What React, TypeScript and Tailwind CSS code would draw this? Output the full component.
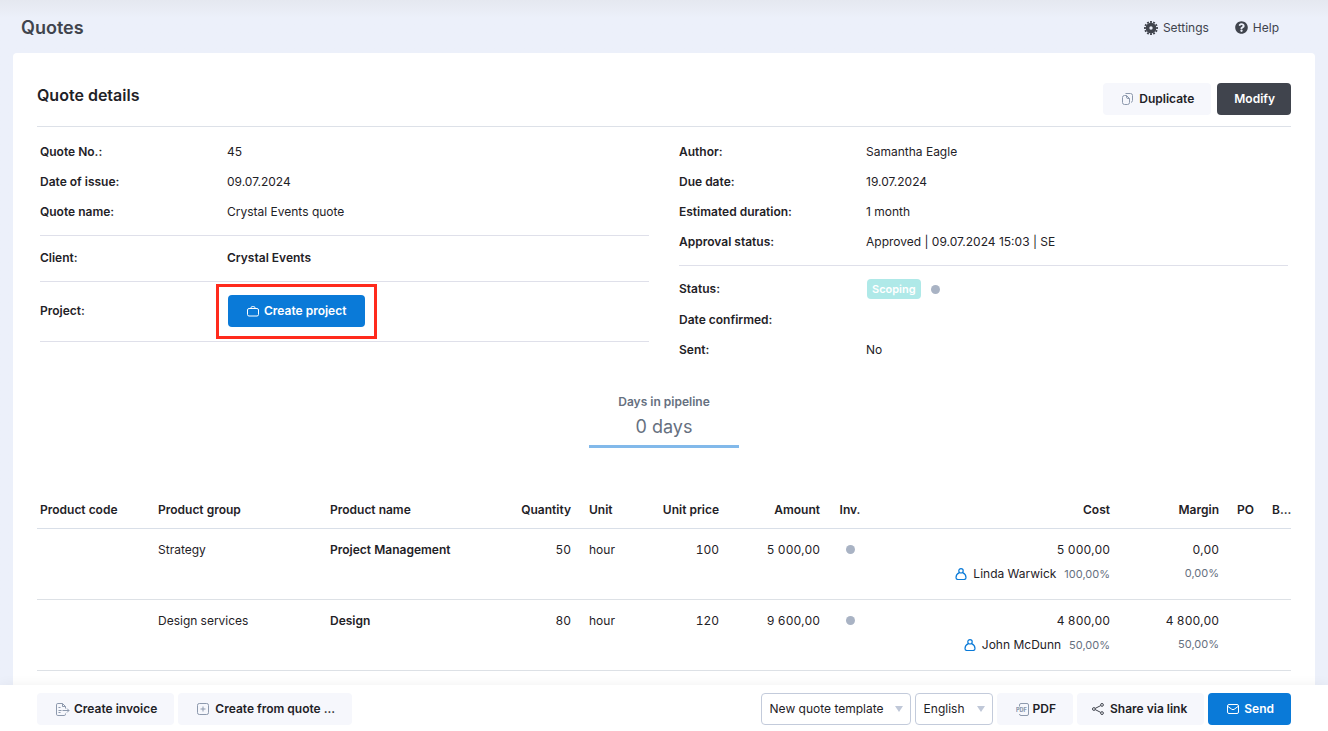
import type { ReactNode } from 'react'
import { FaQuestionCircle } from 'react-icons/fa'

const lines = [
  {
    group: 'Strategy',
    name: 'Project Management',
    quantity: '50',
    unit: 'hour',
    price: '100',
    amount: '5 000,00',
    cost: '5 000,00',
    person: 'Linda Warwick',
    share: '100,00%',
    margin: '0,00',
    marginPct: '0,00%',
  },
  {
    group: 'Design services',
    name: 'Design',
    quantity: '80',
    unit: 'hour',
    price: '120',
    amount: '9 600,00',
    cost: '4 800,00',
    person: 'John McDunn',
    share: '50,00%',
    margin: '4 800,00',
    marginPct: '50,00%',
  },
]

function GearIcon() {
  return (
    <svg width="14" height="14" viewBox="0 0 14 14" fill="none" stroke="currentColor" aria-hidden="true">
      <circle cx="7" cy="7" r="3.500" strokeWidth="3.600" />
      <circle cx="7" cy="7" r="6" strokeWidth="2" pathLength="96" strokeDasharray="4.800 3.200" strokeDashoffset="2.400" />
    </svg>
  )
}

function CopyIcon() {
  return (
    <svg width="11" height="12" viewBox="0 0 11 12" fill="none" stroke="#8d99ad" strokeLinejoin="round" aria-hidden="true">
      <path d="M4.500 2.500H2.500a2 2 0 0 0-2 2v5a2 2 0 0 0 2 2h3a2 2 0 0 0 2-2V5.500Z" />
      <path d="M4.500 2.500v1.500a1.500 1.500 0 0 0 1.500 1.500h1.500" />
      <path d="M3.500 .5h5a2 2 0 0 1 2 2v5a2 2 0 0 1-1.500 1.900" />
    </svg>
  )
}

function BriefcaseIcon() {
  return (
    <svg width="12" height="12" viewBox="0 0 12 12" fill="none" stroke="currentColor" aria-hidden="true">
      <rect x=".5" y="3.500" width="11" height="7.500" rx="1.500" />
      <path d="M4 3.500v-.7a1.200 1.200 0 0 1 1.200-1.200h1.600A1.200 1.200 0 0 1 8 2.800v.7" />
    </svg>
  )
}

function InvoiceIcon() {
  return (
    <svg width="14" height="13" viewBox="0 0 14 13" fill="none" stroke="#8d99ad" aria-hidden="true">
      <path d="M9.500 10.500v.7a1.300 1.300 0 0 1-1.300 1.300H1.800A1.300 1.300 0 0 1 .5 11.200V1.800A1.300 1.300 0 0 1 1.800.5h4.700l3 3V5.500" />
      <path d="M6.500.5v3h3M2.500 4.500h2M2.500 7.500h3M2.500 9.500h2" />
      <path d="M6.500 7.500h6.500M11 5.500l2 2-2 2" />
    </svg>
  )
}

function PlusBoxIcon() {
  return (
    <svg width="12" height="12" viewBox="0 0 12 12" fill="none" stroke="#8d99ad" aria-hidden="true">
      <rect x=".5" y=".5" width="11" height="11" rx="1.800" />
      <path d="M6 3.500v5M3.500 6h5" />
    </svg>
  )
}

function PdfIcon() {
  return (
    <svg width="13" height="13" viewBox="0 0 13 13" fill="none" stroke="#8d99ad" aria-hidden="true">
      <path d="M3.500 3.500V2A1.500 1.500 0 0 1 5 .5h6A1.500 1.500 0 0 1 12.500 2v9A1.500 1.500 0 0 1 11 12.500H5A1.500 1.500 0 0 1 3.500 11" />
      <text x="0" y="9" fontSize="5.500" fontWeight="800" fill="#8d99ad" stroke="none">
        PDF
      </text>
    </svg>
  )
}

function ShareIcon() {
  return (
    <svg
      className="-ml-1"
      width="12"
      height="12"
      viewBox="0 0 12 12"
      fill="none"
      stroke="#40444d"
      aria-hidden="true"
    >
      <circle cx="1.900" cy="6" r="1.400" />
      <circle cx="10" cy="1.900" r="1.400" />
      <circle cx="10" cy="10.100" r="1.400" />
      <path d="m3.200 5.400 5.500-2.800M3.200 6.600l5.500 2.800" />
    </svg>
  )
}

function MailIcon() {
  return (
    <svg width="12" height="12" viewBox="0 0 12 12" fill="none" stroke="currentColor" strokeLinejoin="round" aria-hidden="true">
      <rect x=".5" y="1.500" width="11" height="9" rx="1.500" />
      <path d="m1 3.500 3.700 2.700a2.200 2.200 0 0 0 2.600 0L11 3.500" />
    </svg>
  )
}

function PersonIcon() {
  return (
    <svg width="12" height="12" viewBox="0 0 12 12" fill="none" stroke="#0a7ad8" strokeWidth="1.200" aria-hidden="true">
      <circle cx="6" cy="2.800" r="2.200" />
      <path d="M4.300 4.600C2.300 5.600 1 7.700 1 9.500c0 1.200.8 2 2 2h6c1.200 0 2-.8 2-2 0-1.800-1.300-3.900-3.300-4.900" />
    </svg>
  )
}

function Dot() {
  return <span className="inline-block size-[9px] rounded-full bg-[#a9b3c4]" />
}

function Row({ label, children }: { label: string; children?: ReactNode }) {
  return (
    <div className="flex min-h-[30px] items-center">
      <dt className="w-[187px] shrink-0 font-semibold">{label}</dt>
      <dd>{children}</dd>
    </div>
  )
}

function LightButton({ icon, gap = 'gap-1.5', children }: { icon: ReactNode; gap?: string; children: ReactNode }) {
  return (
    <button
      className={`flex h-8 items-center rounded bg-[#f6f7fc] pr-[17px] pl-[19px] font-semibold whitespace-nowrap ${gap}`}
    >
      {icon}
      {children}
    </button>
  )
}

function Dropdown({ label, value, className }: { label: string; value: string; className: string }) {
  return (
    <div className={`relative ${className}`}>
      <select
        aria-label={label}
        className="h-8 w-full appearance-none rounded border border-[#c3cbdb] bg-white pr-5 pl-2"
      >
        <option>{value}</option>
      </select>
      <svg
        className="pointer-events-none absolute top-[13px] right-2"
        width="8"
        height="6"
        viewBox="0 0 8 6"
        fill="#c0c8d8"
        aria-hidden="true"
      >
        <path d="M0 0h8L4 6Z" />
      </svg>
    </div>
  )
}

export default function App() {
  return (
    <div className="flex min-h-screen flex-col bg-[#ecf0fa] bg-linear-to-b from-[#e5e8f0] to-[#ecf0fa] to-[18px] font-['Inter',sans-serif] text-[12px] leading-4 text-[#1f2227]">
      <header className="flex h-[53px] items-center justify-between pt-0.5 pr-[49px] pl-[21px] text-[#40444d]">
        <h1 className="text-[18px] leading-6 font-semibold">Quotes</h1>
        <nav className="flex items-center gap-[26px]">
          <a href="#settings" className="flex items-center gap-[5px]">
            <GearIcon />
            Settings
          </a>
          <a href="#help" className="flex items-center gap-[5px]">
            <FaQuestionCircle size={13} />
            Help
          </a>
        </nav>
      </header>

      <main className="mx-[13px] flex-1 rounded-t bg-white px-6 pt-[30px]">
        <div className="flex items-start justify-between border-b border-[#dde1e8] pb-[11px]">
          <h2 className="text-[16px] leading-6 font-semibold">Quote details</h2>
          <div className="flex gap-1.5">
            <LightButton icon={<CopyIcon />}>Duplicate</LightButton>
            <button className="h-8 rounded bg-[#40444d] pr-4 pl-[17px] font-semibold text-white">Modify</button>
          </div>
        </div>

        <div className="grid grid-cols-2 gap-[30px] px-[3px] pt-2.5">
          <dl>
            <div className="border-b border-[#dfe0ea] pb-2">
              <Row label="Quote No.:">45</Row>
              <Row label="Date of issue:">09.07.2024</Row>
              <Row label="Quote name:">Crystal Events quote</Row>
            </div>
            <div className="border-b border-[#dfe0ea] pt-[7px] pb-2">
              <Row label="Client:">
                <span className="font-semibold">Crystal Events</span>
              </Row>
            </div>
            <div className="border-b border-[#dfe0ea] pt-[13px] pb-[14px]">
              <Row label="Project:">
                <div className="relative ml-px">
                  <button className="flex h-8 items-center gap-[5px] rounded bg-[#0a7ad8] px-[19px] font-semibold text-white">
                    <BriefcaseIcon />
                    Create project
                  </button>
                  <span className="pointer-events-none absolute -inset-x-3 -top-[11px] -bottom-3 border-3 border-[#ff2a1c]" />
                </div>
              </Row>
            </div>
          </dl>
          <dl>
            <div className="border-b border-[#dfe0ea] pb-2">
              <Row label="Author:">Samantha Eagle</Row>
              <Row label="Due date:">19.07.2024</Row>
              <Row label="Estimated duration:">1 month</Row>
              <Row label="Approval status:">Approved | 09.07.2024 15:03 | SE</Row>
            </div>
            <div className="pt-[7px]">
              <Row label="Status:">
                <div className="flex h-8 items-center gap-2.5">
                  <span className="ml-px rounded bg-[#afe9e8] px-[5px] py-0.5 text-[11px] font-semibold text-white">
                    Scoping
                  </span>
                  <Dot />
                </div>
              </Row>
              <Row label="Date confirmed:" />
              <Row label="Sent:">No</Row>
            </div>
          </dl>
        </div>

        <section className="mx-auto mt-[29px] w-[150px] border-b-3 border-[#82b9ea] pb-1.5 text-center text-[#667080]">
          <h3 className="font-semibold">Days in pipeline</h3>
          <p className="mt-[5px] text-[18px] leading-6">0 days</p>
        </section>

        <table className="mt-[44px] w-full table-fixed">
          <colgroup>
            <col className="w-[112px]" />
            <col className="w-[172px]" />
            <col />
            <col className="w-[72px]" />
            <col className="w-[70px]" />
            <col className="w-[78px]" />
            <col className="w-[101px]" />
            <col className="w-[42px]" />
            <col className="w-[248px]" />
            <col className="w-[109px]" />
            <col className="w-[35px]" />
            <col className="w-[28px]" />
          </colgroup>
          <thead>
            <tr className="h-9 border-b border-[#d9dfe8] text-left whitespace-nowrap [&>th]:px-[9px] [&>th]:font-semibold">
              <th className="pl-[3px]!">Product code</th>
              <th>Product group</th>
              <th>Product name</th>
              <th className="text-right">Quantity</th>
              <th>Unit</th>
              <th className="text-right">Unit price</th>
              <th className="text-right">Amount</th>
              <th className="text-center">Inv.</th>
              <th className="text-right">Cost</th>
              <th className="text-right">Margin</th>
              <th>PO</th>
              <th className="pr-0!">B...</th>
            </tr>
          </thead>
          <tbody>
            {lines.map(line => (
              <tr
                key={line.name}
                className="h-[71px] border-b border-[#dde1e6] align-top tabular-nums [&>td]:px-[9px] [&>td]:pt-[13px]"
              >
                <td />
                <td>{line.group}</td>
                <td className="font-semibold">{line.name}</td>
                <td className="text-right">{line.quantity}</td>
                <td>{line.unit}</td>
                <td className="text-right">{line.price}</td>
                <td className="text-right">{line.amount}</td>
                <td className="text-center">
                  <Dot />
                </td>
                <td className="text-right">
                  {line.cost}
                  <div className="mt-2 flex items-center justify-end normal-nums">
                    <PersonIcon />
                    <span className="ml-1.5">{line.person}</span>
                    <span className="ml-2 text-[11px] text-[#667080]">{line.share}</span>
                  </div>
                </td>
                <td className="text-right">
                  {line.margin}
                  <div className="mt-[7px] text-[11px] text-[#667080] normal-nums">{line.marginPct}</div>
                </td>
                <td />
                <td />
              </tr>
            ))}
          </tbody>
        </table>
      </main>

      <footer className="sticky bottom-0 flex items-center justify-between bg-white px-[37px] pt-2 pb-1.5 shadow-[0_0_12px_rgba(0,0,0,0.06)]">
        <div className="flex gap-1">
          <LightButton icon={<InvoiceIcon />} gap="gap-1">Create invoice</LightButton>
          <LightButton icon={<PlusBoxIcon />}>Create from quote ...</LightButton>
        </div>
        <div className="flex gap-1">
          <Dropdown label="Template" value="New quote template" className="w-[150px]" />
          <Dropdown label="Language" value="English" className="w-[78px]" />
          <LightButton icon={<PdfIcon />} gap="gap-1">PDF</LightButton>
          <LightButton icon={<ShareIcon />}>Share via link</LightButton>
          <button className="flex h-8 items-center gap-[5px] rounded bg-[#0a7ad8] pr-[17px] pl-[19px] font-semibold text-white">
            <MailIcon />
            Send
          </button>
        </div>
      </footer>
    </div>
  )
}
